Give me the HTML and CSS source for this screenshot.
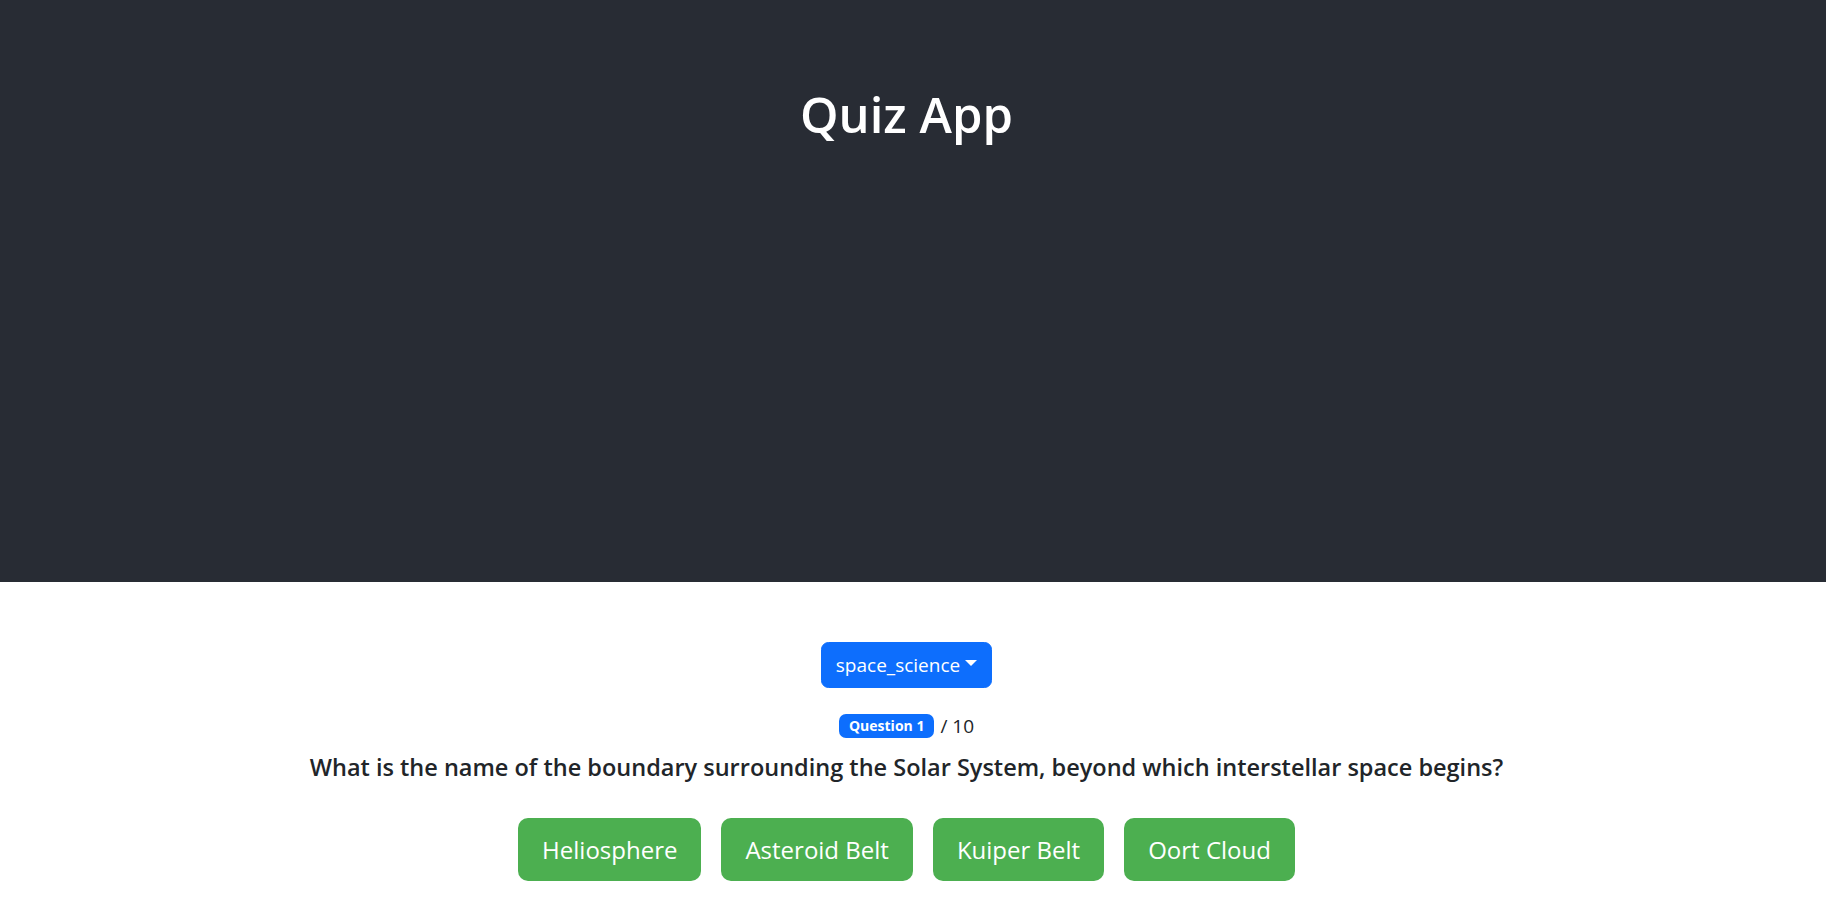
FILE: index.html
```html
<!DOCTYPE html>
<html lang="en">
<head>
<meta charset="utf-8">
<title>Quiz App</title>
<link rel="stylesheet" href="styles.css">
</head>
<body>
<div class="app">
  <header class="app-header">
    <h1 class="title">Quiz App</h1>
  </header>
  <main class="quiz">
    <div class="dropdown">
      <button class="dropdown-toggle" type="button">space_science<span class="caret"></span></button>
    </div>
    <div class="progress-line"><span class="badge">Question 1</span> / 10</div>
    <h2 class="question">What is the name of the boundary surrounding the Solar System, beyond which interstellar space begins?</h2>
    <div class="answers">
      <button class="answer" type="button">Heliosphere</button>
      <button class="answer" type="button">Asteroid Belt</button>
      <button class="answer" type="button">Kuiper Belt</button>
      <button class="answer" type="button">Oort Cloud</button>
    </div>
  </main>
</div>
</body>
</html>
```
FILE: styles.css
```css
* { box-sizing: border-box; }
html, body { margin: 0; padding: 0; }
body {
  font-family: "Open Sans", "Noto Sans", sans-serif;
  color: #212529;
  background: #ffffff;
}
.app { text-align: center; }
.app-header {
  background: #282c34;
  height: 582px;
  padding-top: 85px;
  padding-right: 13px;
}
.title {
  margin: 0;
  color: #ffffff;
  font-size: 49px;
  font-weight: 600;
  line-height: 1.2;
}
.quiz {
  padding-top: 60px;
  padding-right: 13px;
  display: flex;
  flex-direction: column;
  align-items: center;
}
.dropdown-toggle {
  font-family: inherit;
  font-size: 19px;
  line-height: 30px;
  padding: 7px 14px;
  border: 1px solid #0d6efd;
  background: #0d6efd;
  color: #ffffff;
  border-radius: 7.5px;
  display: inline-flex;
  align-items: center;
  cursor: pointer;
}
.caret {
  display: inline-block;
  margin-left: 5px;
  width: 0;
  height: 0;
  border-left: 6px solid transparent;
  border-right: 6px solid transparent;
  border-top: 6px solid #ffffff;
  position: relative;
  top: -2px;
}
.progress-line {
  margin-top: 25px;
  font-size: 19px;
  line-height: 26px;
  display: flex;
  align-items: center;
  gap: 6px;
}
.badge {
  display: inline-block;
  background: #0d6efd;
  color: #ffffff;
  font-size: 14px;
  font-weight: 700;
  line-height: 1;
  padding: 5px 10px;
  border-radius: 7px;
}
.question {
  margin: 10px 0 0;
  font-size: 23.5px;
  font-weight: 600;
  line-height: 36px;
}
.answers {
  margin-top: 33px;
  display: flex;
  gap: 20px;
  justify-content: center;
}
.answer {
  font-family: inherit;
  font-size: 24px;
  line-height: 37px;
  padding: 13px 24px;
  border: 0;
  border-radius: 10px;
  background: #4caf50;
  color: #ffffff;
  cursor: pointer;
}
```
